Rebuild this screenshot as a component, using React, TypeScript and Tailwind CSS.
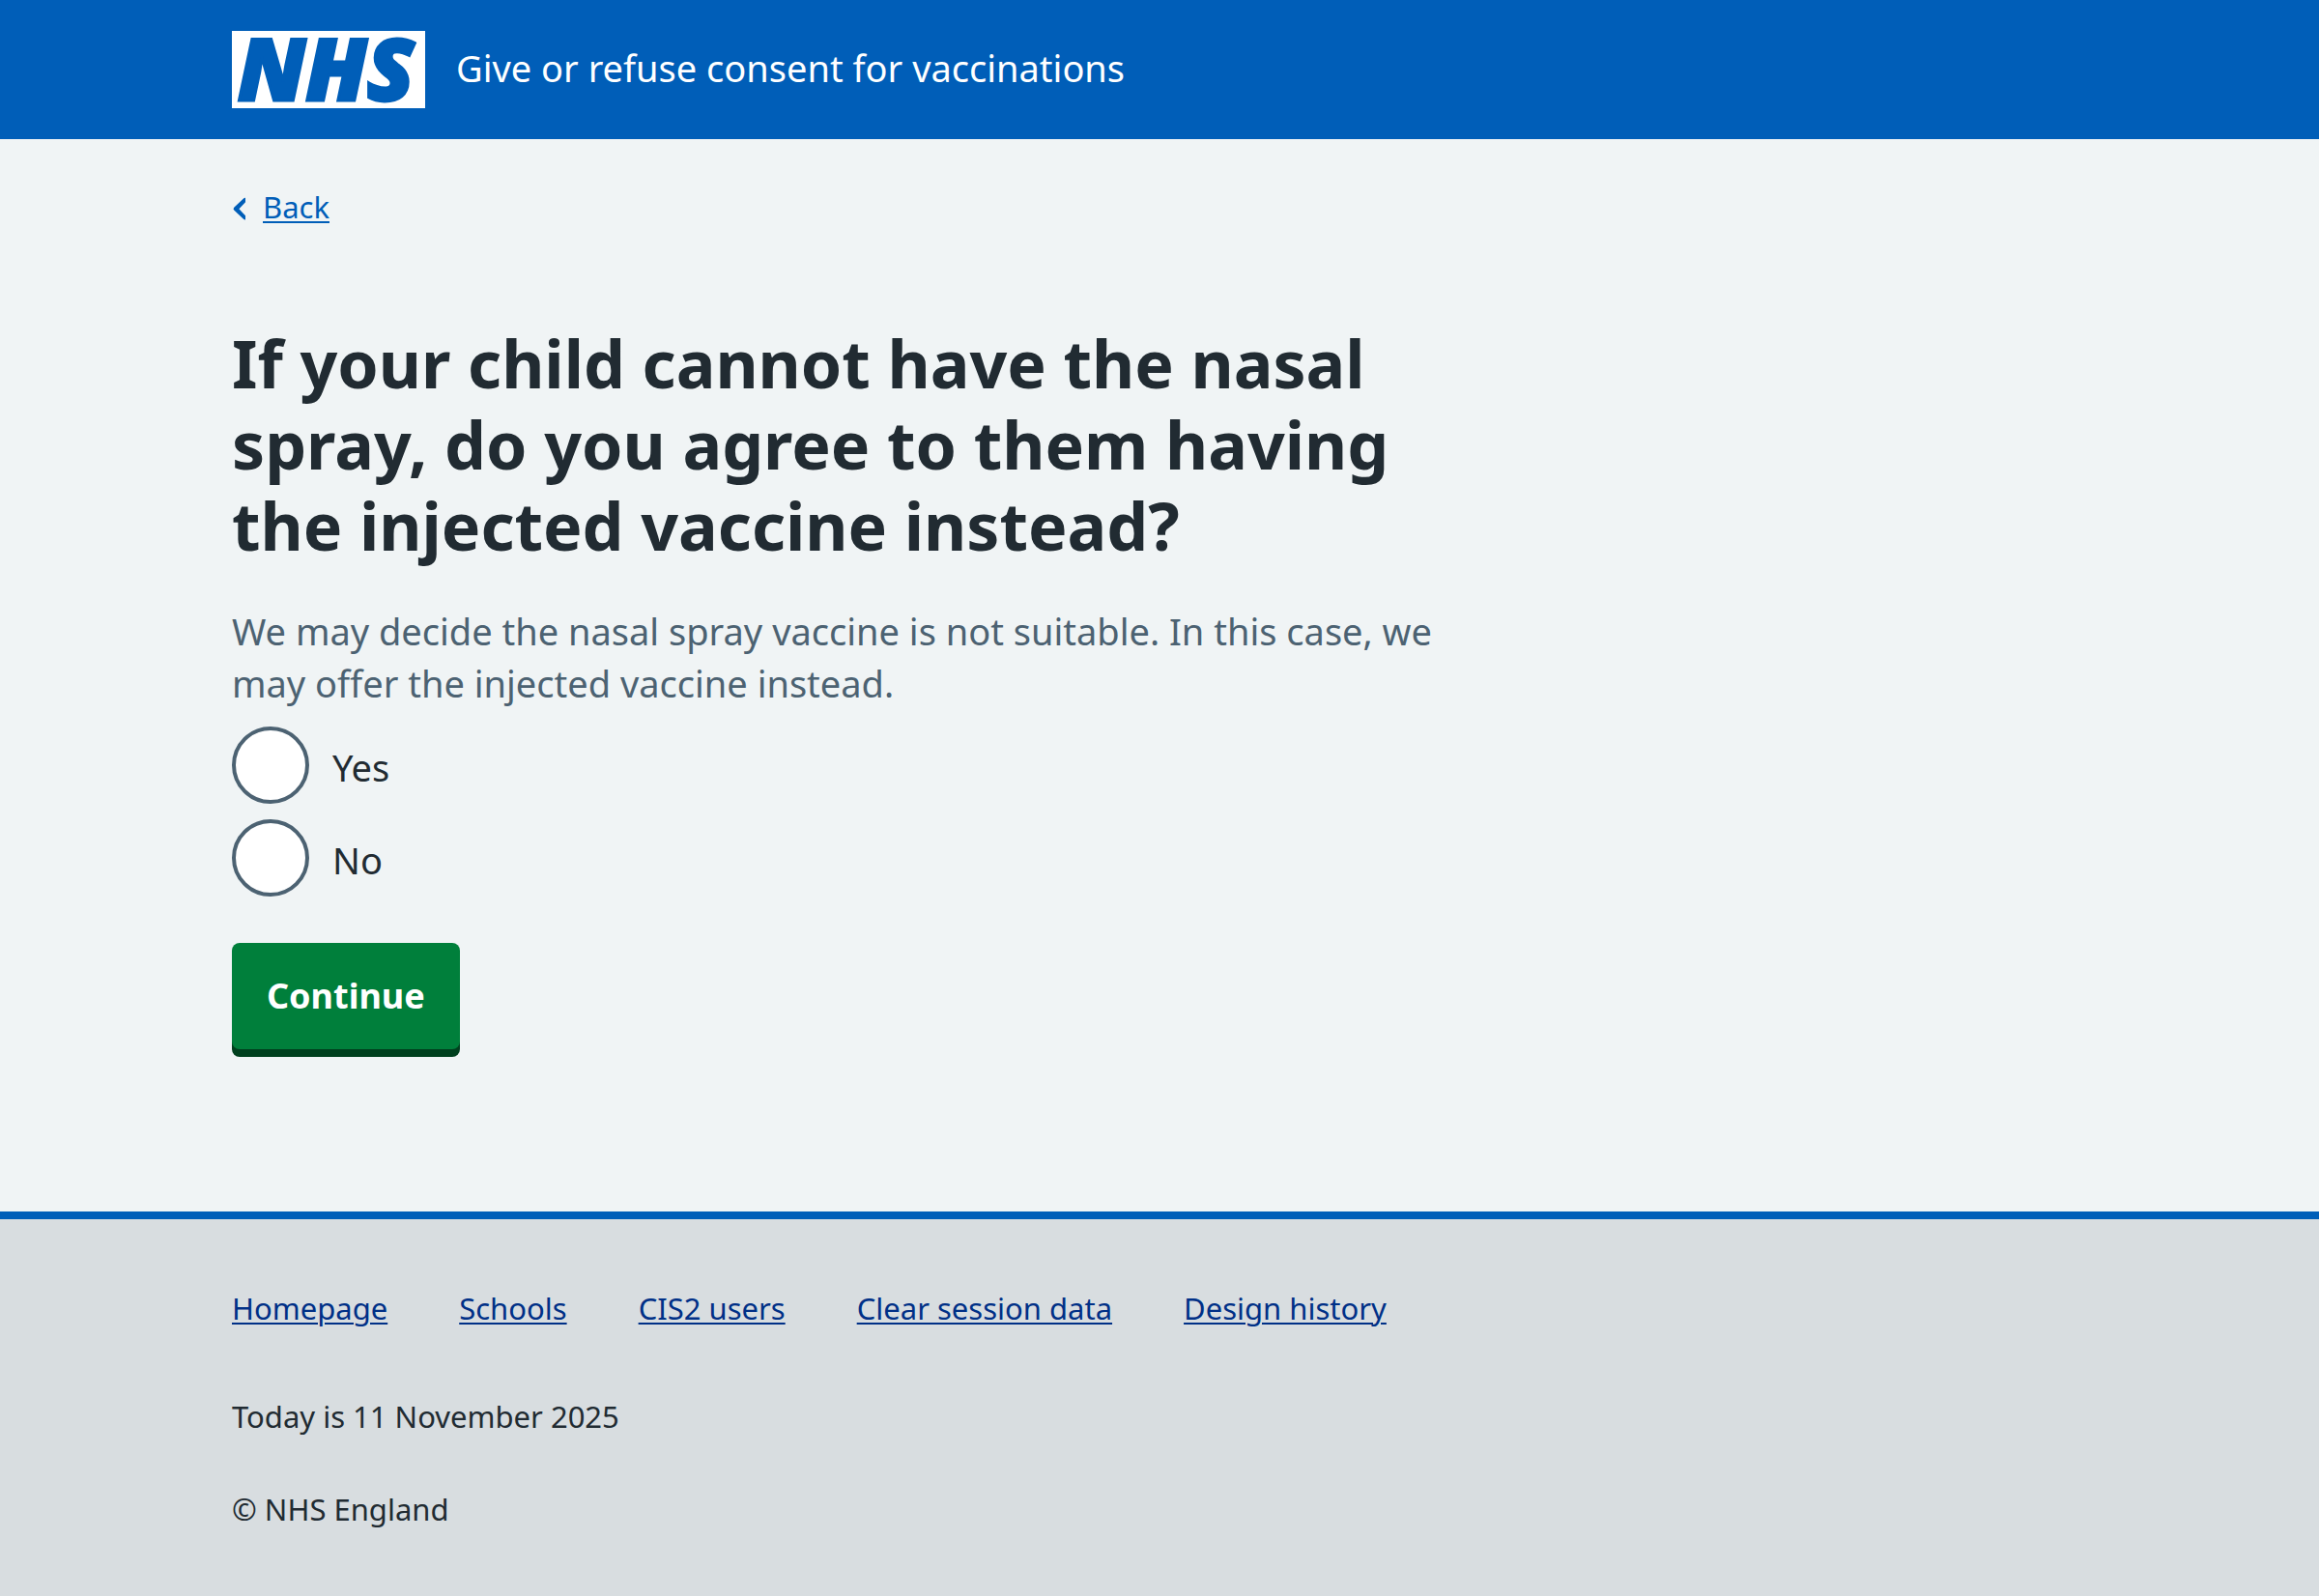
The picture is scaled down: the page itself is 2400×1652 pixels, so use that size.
import React from "react";

const footerLinks = ["Homepage", "Schools", "CIS2 users", "Clear session data", "Design history"];

function Header() {
  return (
    <header className="bg-[#005eb8] text-white">
      <div className="mx-auto flex max-w-[1920px] items-center gap-8 py-8">
        <svg viewBox="0 0 200 80" className="h-20 w-[200px] shrink-0 overflow-visible" role="img" aria-label="NHS">
          <rect width="200" height="80" fill="#fff" />
          <text
            x="6"
            y="72"
            fill="#005eb8"
            stroke="#005eb8"
            strokeWidth="3"
            fontFamily='"Noto Sans", sans-serif'
            fontSize="89"
            fontWeight="900"
            fontStyle="italic"
          >
            NHS
          </text>
        </svg>
        <span className="pb-1 text-[38px] leading-[54px]">Give or refuse consent for vaccinations</span>
      </div>
    </header>
  );
}

function BackLink() {
  return (
    <a href="#" className="flex w-fit items-center text-[31px] leading-12 text-[#005eb8]">
      <svg viewBox="0 0 16 24" className="mt-1 mr-4 h-6 w-4" fill="currentColor" aria-hidden="true">
        <path d="M14 .8v4.400L7.400 12.200l6.600 7v4.400c-.8.1-1.400-.2-2-.8L2.200 13.600a2 2 0 0 1 0-2.800L12 1.600c.6-.6 1.200-.9 2-.8z" />
      </svg>
      <span className="underline decoration-2 underline-offset-3">Back</span>
    </a>
  );
}

function RadioOption({ id, label }: { id: string; label: string }) {
  return (
    <div className="flex items-center">
      <input
        type="radio"
        id={id}
        name="injection"
        className="size-20 shrink-0 appearance-none rounded-full border-4 border-[#4c6272] bg-white checked:shadow-[inset_0_0_0_16px_white] checked:bg-[#212b32]"
      />
      <label htmlFor={id} className="px-6 pt-1 text-[38px] leading-[54px] text-[#212b32]">
        {label}
      </label>
    </div>
  );
}

export default function App() {
  return (
    <div className="flex min-h-screen flex-col bg-[#f0f4f5] font-['Noto_Sans',sans-serif] text-[#212b32]">
      <Header />
      <div className="mx-auto w-full max-w-[1920px] pt-[46px]">
        <BackLink />
        <main className="pt-24 pb-[168px]">
          <form className="max-w-[1248px]" onSubmit={(e) => e.preventDefault()}>
            <fieldset>
              <legend>
                <h1 className="text-[68px] leading-[84px] font-bold">
                  If your child cannot have the nasal spray, do you agree to them having the injected vaccine instead?
                </h1>
              </legend>
              <p className="mt-10 text-[38px] leading-[54px] text-[#4c6272]">
                We may decide the nasal spray vaccine is not suitable. In this case, we may offer the injected vaccine
                instead.
              </p>
              <div className="mt-[18px] flex flex-col gap-4">
                <RadioOption id="injection-yes" label="Yes" />
                <RadioOption id="injection-no" label="No" />
              </div>
            </fieldset>
            <button
              type="submit"
              className="mt-12 block rounded-lg bg-[#007f3b] px-9 py-7 text-[36px] leading-[54px] font-bold text-white shadow-[0_8px_0_#00401e]"
            >
              Continue
            </button>
          </form>
        </main>
      </div>
      <footer className="grow border-t-8 border-[#005eb8] bg-[#d8dde0]">
        <div className="mx-auto max-w-[1920px] py-[68px] text-[31px] leading-12">
          <ul className="flex flex-wrap gap-x-[74px] gap-y-4">
            {footerLinks.map((label) => (
              <li key={label}>
                <a href="#" className="text-[#003087] underline decoration-2 underline-offset-3">
                  {label}
                </a>
              </li>
            ))}
          </ul>
          <p className="mt-16">Today is 11 November 2025</p>
          <p className="mt-12">© NHS England</p>
        </div>
      </footer>
    </div>
  );
}
